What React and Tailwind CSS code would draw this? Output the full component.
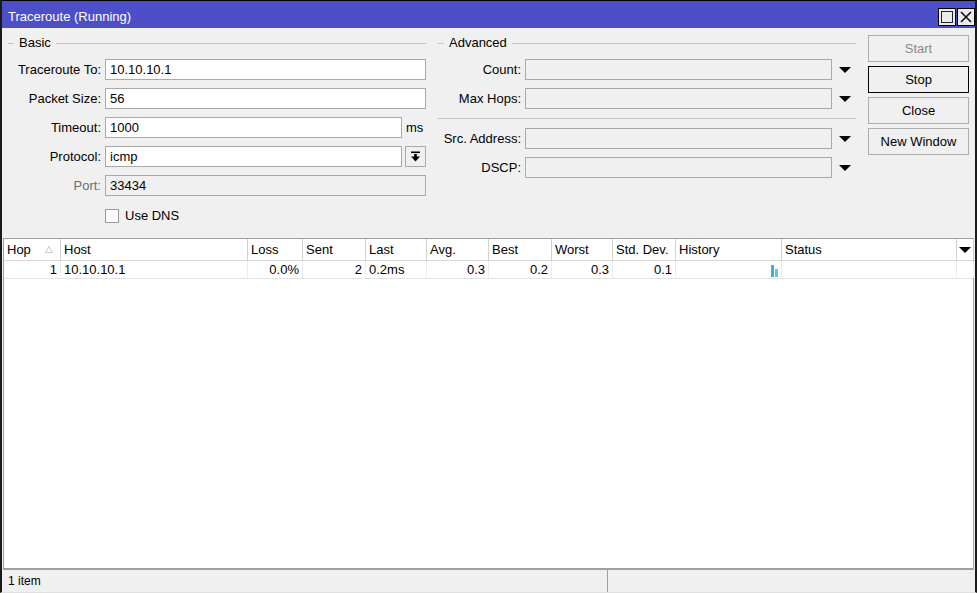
import React from "react";

const Tri = () => (
  <svg width="14" height="8" viewBox="0 0 14 8" className="shrink-0">
    <polygon points="1,1 13,1 7,7" fill="#000" />
  </svg>
);

function Field({ label, value, width = "w-[321px]", disabled = false, labelGray = false }) {
  return (
    <div className="flex items-center h-[21px]">
      <div className={`w-[97px] pr-[4px] text-right whitespace-nowrap ${labelGray ? "text-[#6d6d6d]" : "text-black"}`}>{label}</div>
      <div className={`${width} h-[21px] border border-[#a9a9a9] ${disabled ? "bg-[#f0f0f0]" : "bg-white"} px-[4px] leading-[19px]`}>{value}</div>
    </div>
  );
}

function AdvField({ label }) {
  return (
    <div className="flex items-center h-[21px]">
      <div className="w-[87px] pr-[4px] text-right whitespace-nowrap">{label}</div>
      <div className="w-[307px] h-[21px] border border-[#a9a9a9] bg-[#f0f0f0]" />
      <div className="ml-[6px]"><Tri /></div>
    </div>
  );
}

function Legend({ title, width }) {
  return (
    <div className={`flex items-center h-[16px] ${width}`}>
      <div className="w-[6px] h-px bg-[#c4c4c4]" />
      <div className="px-[5px] leading-[16px]">{title}</div>
      <div className="flex-1 h-px bg-[#c4c4c4]" />
    </div>
  );
}

function Btn({ children, gray = false, focus = false }) {
  return (
    <div className={`w-[101px] h-[27px] flex items-center justify-center border ${focus ? "border-black" : "border-[#adadad]"} bg-[#f0f0f0] ${gray ? "text-[#8a8a8a]" : "text-black"}`}>
      {children}
    </div>
  );
}

const cols = [
  { name: "Hop", w: "w-[57px]", v: "1", align: "right" },
  { name: "Host", w: "w-[187px]", v: "10.10.10.1", align: "left" },
  { name: "Loss", w: "w-[55px]", v: "0.0%", align: "right" },
  { name: "Sent", w: "w-[63px]", v: "2", align: "right" },
  { name: "Last", w: "w-[61px]", v: "0.2ms", align: "left" },
  { name: "Avg.", w: "w-[62px]", v: "0.3", align: "right" },
  { name: "Best", w: "w-[63px]", v: "0.2", align: "right" },
  { name: "Worst", w: "w-[61px]", v: "0.3", align: "right" },
  { name: "Std. Dev.", w: "w-[63px]", v: "0.1", align: "right" },
  { name: "History", w: "w-[106px]", v: "hist", align: "left" },
  { name: "Status", w: "w-[175px]", v: "", align: "left" },
];

export default function App() {
  return (
    <div
      className="w-[977px] h-[593px] bg-[#f0f0f0] border-t border-l-2 border-r-2 border-b border-t-black border-l-[#1a1a1a] border-r-[#1a1a1a] border-b-[#e0e0e0] flex flex-col text-[13px] text-black overflow-hidden"
      style={{ fontFamily: '"Liberation Sans", Arial, sans-serif' }}
    >
      {/* Title bar */}
      <div className="h-[27px] bg-[#4c4fc8] flex items-start pl-[6px] shrink-0">
        <div className="text-white text-[13px] flex-1 pt-[8px] leading-[16px]">Traceroute (Running)</div>
        <div className="flex gap-[1px] mt-[7px]">
          <div className="w-[18px] h-[18px] bg-[#ececec] border border-black flex items-center justify-center">
            <div className="w-[12px] h-[12px] border border-[#222]" />
          </div>
          <div className="w-[18px] h-[18px] bg-[#ececec] border border-black flex items-center justify-center">
            <svg width="14" height="14" viewBox="0 0 14 14">
              <path d="M2 2 L12 12 M12 2 L2 12" stroke="#111" strokeWidth="1.6" />
            </svg>
          </div>
        </div>
      </div>

      {/* Form section */}
      <div className="flex pl-[6px] pt-[7px] h-[210px] shrink-0">
        {/* Basic */}
        <div className="w-[418px] flex flex-col">
          <Legend title="Basic" width="w-[418px]" />
          <div className="flex flex-col gap-[8px] mt-[8px]">
            <Field label="Traceroute To:" value="10.10.10.1" />
            <Field label="Packet Size:" value="56" />
            <div className="flex items-center">
              <Field label="Timeout:" value="1000" width="w-[297px]" />
              <div className="ml-[4px]">ms</div>
            </div>
            <div className="flex items-center">
              <Field label="Protocol:" value="icmp" width="w-[297px]" />
              <div className="ml-[3px] w-[21px] h-[21px] border border-[#a9a9a9] bg-[#f0f0f0] flex items-center justify-center">
                <svg width="11" height="11" viewBox="0 0 11 11">
                  <rect x="1" y="0.5" width="9" height="1.6" fill="#000" />
                  <rect x="4.2" y="3" width="2.6" height="3" fill="#000" />
                  <polygon points="1,5.5 10,5.5 5.5,10.5" fill="#000" />
                </svg>
              </div>
            </div>
            <Field label="Port:" value="33434" disabled labelGray />
          </div>
          <div className="flex items-center mt-[10px] ml-[97px]">
            <div className="w-[14px] h-[14px] border border-[#9a9a9a] bg-white" />
            <div className="ml-[6px]">Use DNS</div>
          </div>
        </div>

        {/* Advanced */}
        <div className="w-[418px] ml-[12px] flex flex-col">
          <Legend title="Advanced" width="w-[418px]" />
          <div className="flex flex-col gap-[8px] mt-[8px]">
            <AdvField label="Count:" />
            <AdvField label="Max Hops:" />
          </div>
          <div className="h-px bg-[#c4c4c4] mt-[9px] mb-[9px]" />
          <div className="flex flex-col gap-[8px]">
            <AdvField label="Src. Address:" />
            <AdvField label="DSCP:" />
          </div>
        </div>

        {/* Buttons */}
        <div className="ml-[12px] flex flex-col gap-[4px]">
          <Btn gray>Start</Btn>
          <Btn focus>Stop</Btn>
          <Btn>Close</Btn>
          <Btn>New Window</Btn>
        </div>
      </div>

      {/* Table */}
      <div className="flex-1 ml-[1px] mr-[1px] border-t border-l border-r border-[#a0a0a0] bg-white flex flex-col min-h-0">
        <div className="flex h-[22px] border-b border-[#d6d6d6] bg-white shrink-0">
          {cols.map((c, i) => (
            <div key={i} className={`${c.w} shrink-0 border-r border-[#d0d0d0] px-[3px] leading-[21px] flex items-center whitespace-nowrap`}>
              <span>{c.name}</span>
              {c.name === "Hop" && (
                <svg width="8" height="7" viewBox="0 0 8 7" className="ml-auto mr-[4px]">
                  <polygon points="4,0.5 7.5,6.5 0.5,6.5" fill="none" stroke="#c8c8c8" />
                </svg>
              )}
            </div>
          ))}
          <div className="w-[17px] shrink-0 border-r border-[#d0d0d0] flex items-center justify-center">
            <Tri />
          </div>
          <div className="flex-1" />
        </div>
        <div className="flex h-[18px] border-b border-[#e3e3e3] shrink-0">
          {cols.map((c, i) => (
            <div key={i} className={`${c.w} shrink-0 border-r border-[#ececec] px-[3px] leading-[17px] whitespace-nowrap ${c.align === "right" ? "text-right" : "text-left"}`}>
              {c.v === "hist" ? (
                <div className="flex justify-end items-end h-[17px] gap-[1px] pr-[0px] pb-[1px]">
                  <div className="w-[3px] h-[12px] bg-[#3aaee0]" />
                  <div className="w-[3px] h-[8px] bg-[#5cc8d8]" />
                </div>
              ) : (
                c.v
              )}
            </div>
          ))}
          <div className="w-[17px] shrink-0 border-r border-[#ececec]" />
        </div>
        <div className="flex-1" />
      </div>

      {/* Status bar */}
      <div className="h-[24px] border-t-2 border-[#a0a0a0] mx-[1px] flex shrink-0 bg-[#f0f0f0]">
        <div className="w-[605px] border-r border-[#a0a0a0] pl-[5px] leading-[22px] text-[12px]">1 item</div>
        <div className="flex-1" />
      </div>
    </div>
  );
}
